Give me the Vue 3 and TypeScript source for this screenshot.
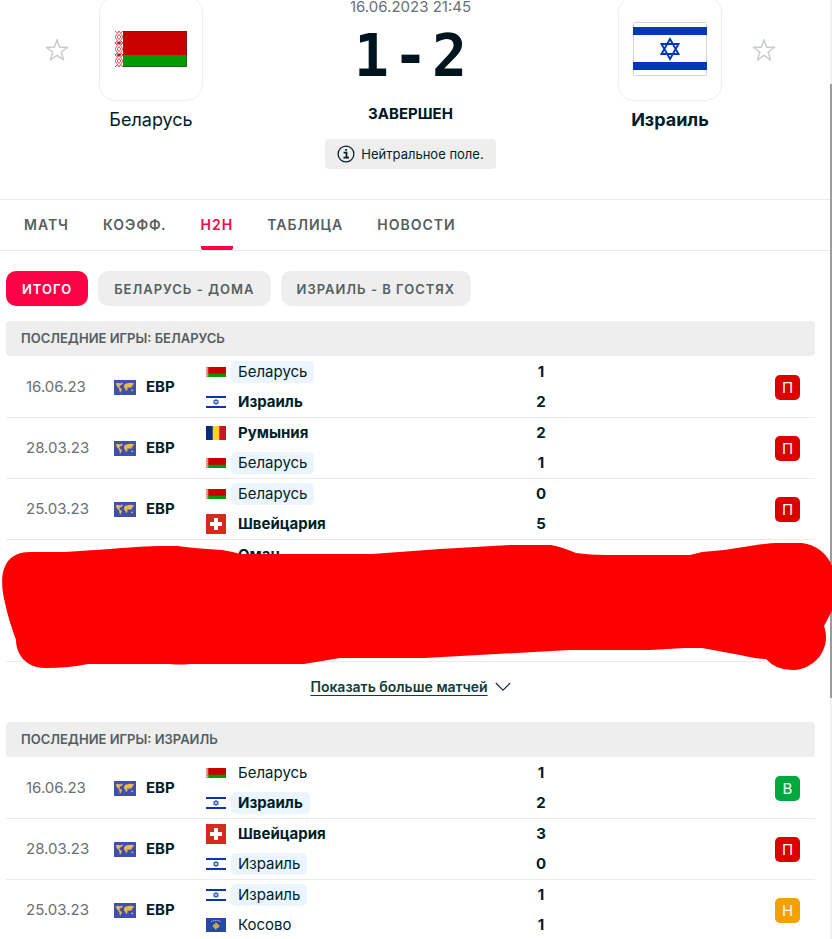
<script setup lang="ts">
type Flag = 'by' | 'il' | 'ro' | 'ch' | 'xk'

interface Team {
  name: string
  flag?: Flag
  score?: string
  marked?: boolean
  winner?: boolean
}

interface Game {
  date?: string
  event?: string
  teams: Team[]
  result?: 'П' | 'В' | 'Н'
}

interface Section {
  title: string
  games: Game[]
  more: boolean
}

const tabs = ['МАТЧ', 'КОЭФФ.', 'H2H', 'ТАБЛИЦА', 'НОВОСТИ']
const filters = ['ИТОГО', 'БЕЛАРУСЬ - ДОМА', 'ИЗРАИЛЬ - В ГОСТЯХ']

const resultClass = { П: 'loss', В: 'win', Н: 'draw' }

const flagHeight: Record<Flag, number> = { by: 10, il: 12, ro: 14, ch: 20, xk: 14 }

const sections: Section[] = [
  {
    title: 'ПОСЛЕДНИЕ ИГРЫ: БЕЛАРУСЬ',
    more: true,
    games: [
      {
        date: '16.06.23',
        event: 'ЕВР',
        result: 'П',
        teams: [
          { name: 'Беларусь', flag: 'by', score: '1', marked: true },
          { name: 'Израиль', flag: 'il', score: '2', winner: true },
        ],
      },
      {
        date: '28.03.23',
        event: 'ЕВР',
        result: 'П',
        teams: [
          { name: 'Румыния', flag: 'ro', score: '2', winner: true },
          { name: 'Беларусь', flag: 'by', score: '1', marked: true },
        ],
      },
      {
        date: '25.03.23',
        event: 'ЕВР',
        result: 'П',
        teams: [
          { name: 'Беларусь', flag: 'by', score: '0', marked: true },
          { name: 'Швейцария', flag: 'ch', score: '5', winner: true },
        ],
      },
      { teams: [{ name: 'Оман', winner: true }] },
      { teams: [] },
    ],
  },
  {
    title: 'ПОСЛЕДНИЕ ИГРЫ: ИЗРАИЛЬ',
    more: false,
    games: [
      {
        date: '16.06.23',
        event: 'ЕВР',
        result: 'В',
        teams: [
          { name: 'Беларусь', flag: 'by', score: '1' },
          { name: 'Израиль', flag: 'il', score: '2', marked: true, winner: true },
        ],
      },
      {
        date: '28.03.23',
        event: 'ЕВР',
        result: 'П',
        teams: [
          { name: 'Швейцария', flag: 'ch', score: '3', winner: true },
          { name: 'Израиль', flag: 'il', score: '0', marked: true },
        ],
      },
      {
        date: '25.03.23',
        event: 'ЕВР',
        result: 'Н',
        teams: [
          { name: 'Израиль', flag: 'il', score: '1', marked: true },
          { name: 'Косово', flag: 'xk', score: '1' },
        ],
      },
    ],
  },
]
</script>

<template>
  <div class="page">
    <!-- Shared flag drawings -->
    <svg class="defs" width="0" height="0" aria-hidden="true">
      <defs>
        <symbol id="star" viewBox="0 0 24 24">
          <path d="M12 1.8 14.6 9.3H22.6L16.2 14 18.6 21.9 12 17.3 5.4 21.9 7.8 14 1.4 9.3H9.4Z" fill="none" stroke="#c9cdcd" stroke-width="1.5" stroke-linejoin="round" />
        </symbol>
        <symbol id="flag-by" viewBox="0 0 20 10" preserveAspectRatio="none">
          <rect width="20" height="10" fill="#c80000" />
          <rect y="6.7" width="20" height="3.3" fill="#059a05" />
          <rect width="2.2" height="10" fill="#f3b4b4" />
          <path d="M1.1 0V10" stroke="#d33" stroke-width=".8" stroke-dasharray="1.4 .8" />
        </symbol>
        <symbol id="flag-il" viewBox="0 0 20 12">
          <rect width="20" height="12" fill="#fff" />
          <path d="M0 1H20M0 11H20" stroke="#0a36b4" stroke-width="2" />
          <path d="M10 3.2 12.4 7.3H7.6ZM10 8.8 7.6 4.7H12.4Z" fill="none" stroke="#2450c0" stroke-width=".9" />
        </symbol>
        <symbol id="flag-ro" viewBox="0 0 20 14">
          <rect width="20" height="14" fill="#fcd116" />
          <rect width="6.7" height="14" fill="#002b7f" />
          <rect x="13.3" width="6.7" height="14" fill="#ce1126" />
        </symbol>
        <symbol id="flag-ch" viewBox="0 0 20 20">
          <rect width="20" height="20" fill="#d52b1e" />
          <path d="M10 4V16M4 10H16" stroke="#fff" stroke-width="4" />
        </symbol>
        <symbol id="flag-xk" viewBox="0 0 20 14">
          <rect width="20" height="14" fill="#244aa5" />
          <path d="M9.8 4 11.4 5.8 13.6 7.8 12.8 9.6 10.8 10.2 10 12 8.6 10.4 6.6 8.4 7.4 6.6 9 6Z" fill="#d0a650" />
          <path d="M5.2 3.6Q10 1.2 14.8 3.6" fill="none" stroke="#fff" stroke-width=".9" stroke-dasharray="1 .9" />
        </symbol>
        <symbol id="flag-world" viewBox="0 0 22 15">
          <rect width="22" height="15" fill="#3f4fb0" />
          <path d="M1.6 3.6 4 2.8 6.2 3.4 7.8 2.6 9 3.2 7.4 5 6 5.6 5.2 7 6.4 8 8 9 7.4 10.6 6.4 12.4 5.7 12.2 5.4 9.6 4.2 7.6 3 6.4 2.4 4.8Z" fill="#e9bb4a" />
          <path d="M10.2 5.4 10.8 4 12.4 3.4 14.6 3 17 2.8 20.2 3.4 19.4 4.6 18.4 5.6 17.6 7 16.8 8 15.8 7 14.8 8.2 14 7 13.4 7.6 13.6 9 12.6 11 11.8 10.8 11.4 8.8 10.2 8 10 6.6ZM17.4 9.8 18.8 9.6 19.2 10.8 18.2 11.2 17.2 10.8Z" fill="#e9bb4a" />
        </symbol>
        <pattern id="ornament" width="8" height="12" patternUnits="userSpaceOnUse">
          <rect width="8" height="12" fill="#fff" />
          <path d="M4 0 8 6 4 12 0 6ZM4 3.5 5.8 6 4 8.5 2.2 6ZM0 0 2 2M8 0 6 2M0 12 2 10M8 12 6 10" fill="none" stroke="#d8505c" stroke-width="1" />
        </pattern>
      </defs>
    </svg>

    <main class="content">
      <header class="match">
        <button class="star" type="button" aria-label="Беларусь"><svg><use href="#star" /></svg></button>
        <div class="side">
          <div class="crest">
            <svg width="72" height="36" viewBox="0 0 72 36">
              <rect width="72" height="36" fill="#c80000" />
              <rect y="24" width="72" height="12" fill="#059a05" />
              <rect width="8" height="36" fill="url(#ornament)" />
              <path d="M1 12 4 10.5 7 12 4 13.5ZM1 24 4 22.5 7 24 4 25.5Z" fill="#c8102e" />
              <path d="M8 .5H71.5V35.5H8" fill="none" stroke="#333" stroke-opacity=".45" />
            </svg>
          </div>
          <a class="name" href="#">Беларусь</a>
        </div>
        <div class="summary">
          <time class="date">16.06.2023 21:45</time>
          <div class="score"><span>1</span><span>-</span><span>2</span></div>
          <div class="status">ЗАВЕРШЕН</div>
          <div class="note">
            <svg width="18" height="18" viewBox="0 0 18 18">
              <circle cx="9" cy="9" r="7.9" fill="none" stroke="#001e28" stroke-width="1.3" />
              <path d="M6.6 7.6H9.5V12.6M6.4 12.7H12M8.2 4.9H10" fill="none" stroke="#001e28" stroke-width="1.7" />
            </svg>
            <span>Нейтральное поле.</span>
          </div>
        </div>
        <div class="side">
          <div class="crest">
            <svg width="74" height="54" viewBox="0 0 74 54">
              <rect x=".5" y=".5" width="73" height="53" rx="1" fill="#fff" stroke="#d3d3d3" />
              <path d="M0 9H74M0 44H74" stroke="#0038b8" stroke-width="8" />
              <path d="M37 17 45.5 32H28.5ZM37 37 28.5 22H45.5Z" fill="none" stroke="#0038b8" stroke-width="1.9" />
            </svg>
          </div>
          <a class="name winner" href="#">Израиль</a>
        </div>
        <button class="star" type="button" aria-label="Израиль"><svg><use href="#star" /></svg></button>
      </header>

      <nav class="tabs">
        <a v-for="tab in tabs" :key="tab" href="#" class="tab" :class="{ active: tab === 'H2H' }">{{ tab }}</a>
      </nav>

      <div class="body">
        <div class="filters">
          <button v-for="(filter, i) in filters" :key="filter" type="button" class="filter" :class="{ active: i === 0 }">
            {{ filter }}
          </button>
        </div>

        <section v-for="section in sections" :key="section.title" class="section">
          <h2 class="title">{{ section.title }}</h2>
          <table class="games">
            <colgroup>
              <col class="c-date" />
              <col class="c-event" />
              <col />
              <col class="c-score" />
              <col class="c-result" />
            </colgroup>
            <tbody>
              <tr v-for="(game, i) in section.games" :key="i">
                <td class="day">{{ game.date }}</td>
                <td>
                  <div v-if="game.event" class="event">
                    <svg width="22" height="15"><use href="#flag-world" /></svg>
                    <span>{{ game.event }}</span>
                  </div>
                </td>
                <td class="stack">
                  <div v-for="team in game.teams" :key="team.name" class="team">
                    <span class="flag">
                      <svg v-if="team.flag" width="20" :height="flagHeight[team.flag]"><use :href="'#flag-' + team.flag" /></svg>
                    </span>
                    <span class="label" :class="{ marked: team.marked, winner: team.winner }">{{ team.name }}</span>
                  </div>
                </td>
                <td class="stack">
                  <div v-for="team in game.teams" :key="team.name" class="goal">{{ team.score }}</div>
                </td>
                <td class="outcome">
                  <span v-if="game.result" class="badge" :class="resultClass[game.result]">{{ game.result }}</span>
                </td>
              </tr>
            </tbody>
          </table>
          <template v-if="section.more">
            <!-- Marker stroke painted over the last two games -->
            <svg class="marker" viewBox="0 0 832 128" preserveAspectRatio="none" aria-hidden="true">
              <path d="M30 9 H65 L110 6 Q145 3 160 3 H178 Q190 5 222 7 Q234 9 240 11 H372 L440 6 L510 2 H551 Q562 4 576 10 Q590 12 605 12 H690 L702 9 L724 7 L750 3 Q770 0 776 0 H802 C820 2 834 17 834 34 L834 64 L824 83 C832 105 815 127 792 127 Q776 127 766 116 Q756 116 740 112 L702 105 H685 L650 107 H570 L424 115 H340 L304 121 H190 Q180 122 170 121 H88 Q70 125 45 125 C25 125 16 110 16 97 Q8 75 5 60 C-2 32 3 9 30 9Z" fill="#f00" />
            </svg>
            <div class="more">
              <a href="#">Показать больше матчей</a>
              <svg width="16" height="10" viewBox="0 0 16 10">
                <path d="M.8 1 8 8.2 15.2 1" fill="none" stroke="#0f2d37" stroke-width="1.1" />
              </svg>
            </div>
          </template>
        </section>
      </div>
    </main>
    <div class="rail"><div class="thumb"></div></div>
  </div>
</template>

<style>
body {
  margin: 0;
  background: #fff;
}
</style>

<style scoped>
.page {
  display: flex;
  height: 100vh;
  overflow: hidden;
  font-family: Inter, Roboto, "Liberation Sans", sans-serif;
  font-size: 15px;
  line-height: 20px;
  color: #001e28;
}

.defs {
  position: absolute;
}

svg {
  display: block;
  flex: none;
}

a {
  color: inherit;
  text-decoration: none;
}

button {
  border: 0;
  padding: 0;
  font: inherit;
  cursor: pointer;
}

.content {
  flex: 1;
  min-width: 0;
}

.rail {
  flex: none;
  box-sizing: border-box;
  width: 2px;
  padding-top: 84px;
  background: #f0f0f0;
}

.thumb {
  height: 614px;
  background: #9b9b9b;
}

.match {
  display: grid;
  grid-template-columns: 24px 104px 1fr 104px 24px;
  column-gap: 30px;
  align-items: start;
  height: 199px;
  padding: 0 54px 0 45px;
}

.star {
  height: 24px;
  margin-top: 38px;
  background: none;
}

.star svg {
  width: 24px;
  height: 24px;
}

.side {
  display: flex;
  flex-direction: column;
  align-items: center;
  gap: 7px;
  margin-top: -4px;
}

.crest {
  display: flex;
  align-items: center;
  justify-content: center;
  box-sizing: border-box;
  width: 104px;
  height: 105px;
  border: 1px solid #eee;
  border-radius: 16px;
}

.name {
  font-size: 18px;
  line-height: 24px;
}

.winner {
  font-weight: 700;
}

.summary {
  display: flex;
  flex-direction: column;
  align-items: center;
}

.date {
  line-height: 14px;
  color: #6a7072;
}

.score {
  display: flex;
  gap: 4px;
  margin-top: 12px;
  font-family: "DejaVu Sans Mono", "Liberation Mono", monospace;
  font-size: 58px;
  font-weight: 700;
  line-height: 60px;
  color: #00141e;
}

.status {
  margin-top: 18px;
  font-weight: 700;
  color: #00141e;
}

.note {
  display: flex;
  align-items: center;
  gap: 6px;
  height: 30px;
  margin-top: 15px;
  padding: 0 12px;
  border-radius: 4px;
  background: #eee;
  font-size: 13px;
}

.tabs {
  display: flex;
  gap: 34px;
  height: 50px;
  padding: 0 24px;
  border-top: 1px solid #e9ebeb;
  border-bottom: 1px solid #e9ebeb;
  font-size: 14px;
  font-weight: 600;
  letter-spacing: 1px;
  color: #555e61;
}

.tab {
  display: flex;
  align-items: center;
  box-sizing: border-box;
  padding-top: 4px;
  border-bottom: 4px solid transparent;
}

.tab.active {
  color: #ff0046;
  border-color: #ff0046;
  border-radius: 2px;
}

.body {
  padding: 20px 15px 0 6px;
}

.filters {
  display: flex;
  gap: 10px;
  margin-bottom: 15px;
}

.filter {
  height: 35px;
  padding: 0 16px;
  border-radius: 10px;
  background: #eee;
  color: #555e61;
  font-size: 13px;
  font-weight: 600;
  letter-spacing: 1px;
}

.filter.active {
  background: #ff0046;
  color: #fff;
}

.section {
  position: relative;
}

.title {
  margin: 0 0 1px;
  padding: 0 15px;
  border-radius: 4px;
  background: #eee;
  color: #555e61;
  font-size: 13px;
  font-weight: 600;
  line-height: 35px;
}

.games {
  width: 100%;
  table-layout: fixed;
  border-spacing: 0;
}

.c-date {
  width: 108px;
}

.c-event {
  width: 92px;
}

.c-score {
  width: 30px;
}

.c-result {
  width: 259px;
}

td {
  height: 60px;
  padding: 0;
  border-bottom: 1px solid #e9ebeb;
}

.day {
  padding-left: 20px;
  color: #6a7072;
}

.event {
  display: flex;
  align-items: center;
  gap: 10px;
  font-weight: 700;
}

.stack {
  vertical-align: top;
}

.team {
  display: flex;
  align-items: center;
  gap: 5px;
  height: 30px;
}

.flag {
  width: 20px;
}

.label {
  padding: 0 7px;
  border-radius: 5px;
  line-height: 22px;
}

.marked {
  background: #ebf5ff;
}

.goal {
  font-weight: 700;
  line-height: 30px;
  text-align: center;
}

.badge {
  display: block;
  width: 25px;
  margin-left: auto;
  border-radius: 5px;
  color: #fff;
  line-height: 25px;
  text-align: center;
}

.outcome {
  padding-right: 15px;
}

.loss {
  background: #dc0000;
}

.win {
  background: #00a83f;
}

.draw {
  background: #f3a000;
}

.marker {
  position: absolute;
  top: 222px;
  left: -6px;
  z-index: 1;
  width: calc(100% + 23px);
  height: 128px;
}

.more {
  display: flex;
  align-items: center;
  justify-content: center;
  gap: 7px;
  height: 50px;
  padding-bottom: 10px;
}

.more a {
  color: #0f3c3c;
  font-size: 14px;
  font-weight: 600;
  text-decoration: underline;
  text-underline-offset: 3px;
}
</style>
